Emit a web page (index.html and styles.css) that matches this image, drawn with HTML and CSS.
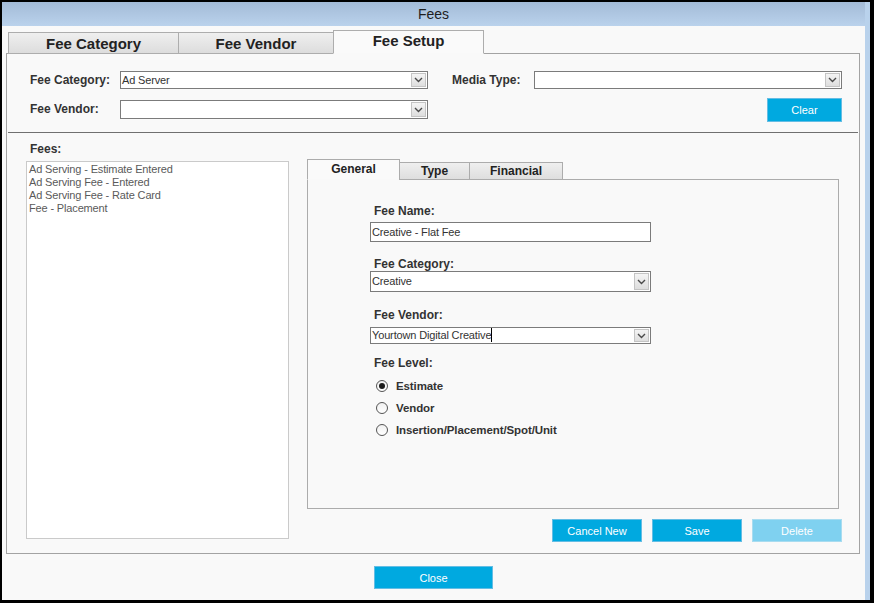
FILE: index.html
```html
<!DOCTYPE html>
<html lang="en">
<head>
    <meta charset="UTF-8">
    <title>Fees</title>
    <link rel="stylesheet" href="styles.css">
</head>
<body>
    <div class="window">
        <div class="titlebar">Fees</div>
        <div class="client">
            <div class="tabs">
                <div class="tab tab-cat">Fee Category</div>
                <div class="tab tab-vendor">Fee Vendor</div>
                <div class="tab tab-setup active">Fee Setup</div>
            </div>
            <div class="tab-panel">
                <div class="filters">
                    <div class="filter-row">
                        <label class="lbl lbl-left">Fee Category:</label>
                        <div class="combo combo-wide">
                            <span class="combo-text">Ad Server</span>
                            <span class="arrow"><svg width="9" height="6" viewBox="0 0 9 6"><path d="M1 1 L4.5 4.5 L8 1" fill="none" stroke="#4a4a4a" stroke-width="1.4"/></svg></span>
                        </div>
                        <label class="lbl lbl-media">Media Type:</label>
                        <div class="combo combo-wide">
                            <span class="combo-text"></span>
                            <span class="arrow"><svg width="9" height="6" viewBox="0 0 9 6"><path d="M1 1 L4.5 4.5 L8 1" fill="none" stroke="#4a4a4a" stroke-width="1.4"/></svg></span>
                        </div>
                    </div>
                    <div class="filter-row row-two">
                        <label class="lbl lbl-left">Fee Vendor:</label>
                        <div class="combo combo-wide combo-vendor">
                            <span class="combo-text"></span>
                            <span class="arrow"><svg width="9" height="6" viewBox="0 0 9 6"><path d="M1 1 L4.5 4.5 L8 1" fill="none" stroke="#4a4a4a" stroke-width="1.4"/></svg></span>
                        </div>
                        <button class="btn btn-clear">Clear</button>
                    </div>
                </div>
                <div class="divider"></div>
                <div class="lower">
                    <div class="fees-col">
                        <div class="lbl fees-lbl">Fees:</div>
                        <ul class="listbox">
                            <li>Ad Serving - Estimate Entered</li>
                            <li>Ad Serving Fee - Entered</li>
                            <li>Ad Serving Fee - Rate Card</li>
                            <li>Fee - Placement</li>
                        </ul>
                    </div>
                    <div class="detail-col">
                        <div class="subtabs">
                            <div class="subtab sub-general active">General</div>
                            <div class="subtab sub-type">Type</div>
                            <div class="subtab sub-fin">Financial</div>
                        </div>
                        <div class="subpanel">
                            <div class="lbl field-lbl first">Fee Name:</div>
                            <div class="textbox">Creative - Flat Fee</div>

                            <div class="lbl field-lbl">Fee Category:</div>
                            <div class="combo combo-form combo-cat">
                                <span class="combo-text">Creative</span>
                                <span class="arrow"><svg width="9" height="6" viewBox="0 0 9 6"><path d="M1 1 L4.5 4.5 L8 1" fill="none" stroke="#4a4a4a" stroke-width="1.4"/></svg></span>
                            </div>

                            <div class="lbl field-lbl vendor-lbl">Fee Vendor:</div>
                            <div class="combo combo-form combo-ven">
                                <span class="combo-text">Yourtown Digital Creative<span class="caret"></span></span>
                                <span class="arrow"><svg width="9" height="6" viewBox="0 0 9 6"><path d="M1 1 L4.5 4.5 L8 1" fill="none" stroke="#4a4a4a" stroke-width="1.4"/></svg></span>
                            </div>

                            <div class="lbl field-lbl level-lbl">Fee Level:</div>
                            <div class="radios">
                                <div class="radio-row"><span class="radio checked"></span>Estimate</div>
                                <div class="radio-row"><span class="radio"></span>Vendor</div>
                                <div class="radio-row"><span class="radio"></span>Insertion/Placement/Spot/Unit</div>
                            </div>
                        </div>
                        <div class="actions">
                            <button class="btn btn-action">Cancel New</button>
                            <button class="btn btn-action">Save</button>
                            <button class="btn btn-action disabled">Delete</button>
                        </div>
                    </div>
                </div>
            </div>
            <div class="footer">
                <button class="btn btn-close">Close</button>
            </div>
        </div>
    </div>
</body>
</html>
```
FILE: styles.css
```css
html, body {
    margin: 0;
    height: 100%;
}

body {
    background: #000;
    padding: 2px 4px 3px 2px;
    box-sizing: border-box;
    font-family: "Liberation Sans", Arial, sans-serif;
    font-size: 12px;
    color: #333;
}

.window {
    width: 868px;
    height: 598px;
    box-sizing: border-box;
    background: #f9f9f9;
    border-right: 5px solid #b9d2ec;
    display: flex;
    flex-direction: column;
}

.titlebar {
    height: 24px;
    line-height: 25px;
    text-align: center;
    font-size: 14px;
    color: #1e1e1e;
    background: linear-gradient(#a3bbd7, #bad2ec);
}

.client {
    flex: 1;
    padding: 4px 0 0 4px;
}

/* main tabs */
.tabs {
    display: flex;
    align-items: flex-end;
    padding-left: 2px;
    height: 24px;
    margin-bottom: -1px;
    position: relative;
    z-index: 1;
}

.tab {
    box-sizing: border-box;
    height: 22px;
    border: 1px solid #adadad;
    background: linear-gradient(#efefef, #dddddd);
    font-weight: bold;
    font-size: 15px;
    color: #222;
    text-align: center;
    line-height: 21px;
}

.tab + .tab {
    margin-left: -1px;
}

.tab-cat { width: 171px; }
.tab-vendor { width: 156px; }
.tab-setup { width: 151px; }

.tab.active {
    height: 24px;
    background: #fafafa;
    border-bottom-color: #f9f9f9;
    line-height: 20px;
}

.tab-panel {
    width: 854px;
    height: 501px;
    box-sizing: border-box;
    border: 1px solid #a3a3a3;
    background: #f9f9f9;
}

.lbl {
    font-weight: bold;
    color: #333;
}

/* filter area */
.filters {
    padding: 17px 17px 0 23px;
}

.filter-row {
    display: flex;
    align-items: center;
    height: 18px;
}

.row-two {
    margin-top: 10px;
    height: 24px;
    align-items: flex-start;
}

.row-two .lbl {
    line-height: 21px;
}

.lbl-left { width: 90px; }

.lbl-media {
    width: 82px;
    margin-left: 24px;
}

.combo {
    box-sizing: border-box;
    display: flex;
    align-items: stretch;
    border: 1px solid #7b7b7b;
    background: #fff;
}

.combo-wide {
    width: 308px;
    height: 18px;
}

.combo-vendor {
    margin-top: 1px;
    height: 19px;
}

.combo-text {
    flex: 1;
    padding-left: 1px;
    line-height: 16px;
    font-size: 11px;
    letter-spacing: -0.15px;
    color: #333;
    white-space: nowrap;
}

.arrow {
    width: 15px;
    margin: 1px;
    box-sizing: border-box;
    border: 1px solid #c4c4c4;
    background: linear-gradient(#f4f4f4, #dedede);
    display: flex;
    align-items: center;
    justify-content: center;
}

.btn {
    box-sizing: border-box;
    border: 1px solid #64bde4;
    background: #00a9e0;
    color: #fff;
    font-family: "Liberation Sans", Arial, sans-serif;
    font-size: 11px;
    padding: 0;
    cursor: pointer;
}

.btn-clear {
    margin-left: auto;
    width: 75px;
    height: 24px;
    margin-top: -1px;
}

.divider {
    margin: 9px 1px 0 1px;
    border-top: 1px solid #707070;
}

/* lower part */
.lower {
    display: flex;
    padding: 0 17px 0 19px;
}

.fees-col {
    width: 263px;
    padding-top: 9px;
}

.fees-lbl {
    line-height: 14px;
    padding-left: 4px;
    margin-bottom: 5px;
}

.listbox {
    list-style: none;
    margin: 0;
    padding: 1px 0 0 2px;
    height: 378px;
    box-sizing: border-box;
    border: 1px solid #cacaca;
    background: #fff;
}

.listbox li {
    line-height: 13px;
    color: #5a5a5a;
    font-size: 11px;
    letter-spacing: -0.15px;
}

.detail-col {
    width: 535px;
    margin-left: 18px;
    padding-top: 26px;
}

.subtabs {
    display: flex;
    align-items: flex-end;
    height: 21px;
    margin-bottom: -1px;
    position: relative;
    z-index: 1;
}

.subtab {
    box-sizing: border-box;
    height: 18px;
    border: 1px solid #acacac;
    background: linear-gradient(#efefef, #dedede);
    font-weight: bold;
    color: #222;
    text-align: center;
    line-height: 17px;
}

.subtab + .subtab {
    margin-left: -1px;
}

.sub-general { width: 93px; }
.sub-type { width: 71px; }
.sub-fin { width: 94px; }

.subtab.active {
    height: 21px;
    background: #fafafa;
    border-bottom-color: #f9f9f9;
    line-height: 18px;
}

.subpanel {
    width: 532px;
    height: 330px;
    box-sizing: border-box;
    border: 1px solid #acacac;
    padding-left: 62px;
}

.field-lbl {
    line-height: 14px;
    padding-left: 4px;
    margin-top: 15px;
}

.field-lbl.first {
    margin-top: 24px;
    margin-bottom: 4px;
}

.vendor-lbl {
    margin-top: 16px;
    margin-bottom: 5px;
}

.level-lbl {
    margin-top: 12px;
}

.textbox {
    box-sizing: border-box;
    width: 281px;
    height: 20px;
    border: 1px solid #7b7b7b;
    background: #fff;
    padding-left: 1px;
    line-height: 18px;
    font-size: 11px;
    letter-spacing: -0.15px;
}

.combo-form {
    width: 281px;
}

.combo-cat {
    height: 21px;
}

.combo-cat .combo-text {
    line-height: 19px;
}

.combo-ven {
    height: 17px;
}

.combo-ven .combo-text {
    line-height: 15px;
}

.caret {
    display: inline-block;
    width: 1px;
    height: 14px;
    background: #000;
    vertical-align: -3px;
}

.radios {
    margin-top: 5px;
}

.radio-row {
    display: flex;
    align-items: center;
    height: 22px;
    padding-left: 6px;
    font-weight: bold;
    font-size: 11.5px;
    letter-spacing: -0.1px;
    color: #333;
}

.radio {
    width: 12px;
    height: 12px;
    box-sizing: border-box;
    border: 1px solid #555;
    border-radius: 50%;
    background: linear-gradient(#f0f0f0, #fff);
    margin-right: 8px;
    display: flex;
    align-items: center;
    justify-content: center;
}

.radio.checked::after {
    content: "";
    width: 6px;
    height: 6px;
    border-radius: 50%;
    background: #1a1a1a;
}

.actions {
    display: flex;
    justify-content: flex-end;
    gap: 10px;
    margin-top: 10px;
}

.btn-action {
    width: 90px;
    height: 23px;
}

.btn.disabled {
    background: #7fd1f0;
    border-color: #a8dcf0;
}

.footer {
    display: flex;
    justify-content: center;
    padding-top: 12px;
    padding-right: 4px;
}

.btn-close {
    width: 119px;
    height: 23px;
}
```
